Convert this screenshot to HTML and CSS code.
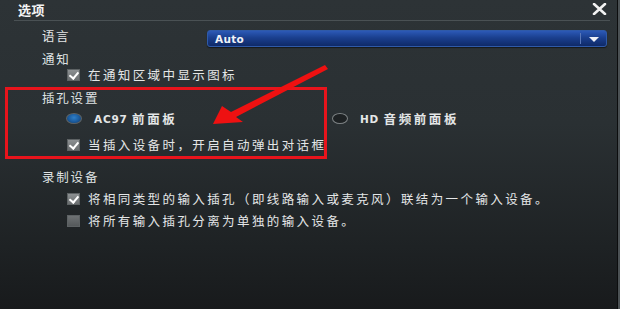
FILE: index.html
```html
<!DOCTYPE html>
<html lang="zh-CN">
<head>
<meta charset="utf-8">
<link rel="stylesheet" href="styles.css">
</head>
<body>
<div class="dialog">
  <div class="titlebar">
    <span class="title">选项</span>
    <svg class="close" width="15" height="12" viewBox="0 0 15 12"><path d="M2 1 L13 11 M13 1 L2 11" stroke="#f2f2f2" stroke-width="2.6" stroke-linecap="round"/></svg>
  </div>
  <div class="content">
    <div class="row lang">
      <span class="lbl">语言</span>
      <div class="select">
        <span class="sel-text">Auto</span>
        <span class="sel-div"></span>
        <span class="sel-arrow"></span>
      </div>
    </div>
    <div class="row head m4">通知</div>
    <div class="row item"><span class="cb on"></span><span>在通知区域中显示图标</span></div>
    <div class="row head m7">插孔设置</div>
    <div class="row radios">
      <div class="opt first"><span class="radio on"></span><span class="lat">AC97 </span><span class="cjk">前面板</span></div>
      <div class="opt"><span class="radio"></span><span class="lat">HD </span><span class="cjk">音频前面板</span></div>
    </div>
    <div class="row item m9"><span class="cb on"></span><span>当插入设备时，开启自动弹出对话框</span></div>
    <div class="row head m16">录制设备</div>
    <div class="row item m6"><span class="cb on"></span><span>将相同类型的输入插孔（即线路输入或麦克风）联结为一个输入设备。</span></div>
    <div class="row item m6"><span class="cb"></span><span>将所有输入插孔分离为单独的输入设备。</span></div>
  </div>
  <div class="highlight"></div>
  <svg class="arrow" width="620" height="309" viewBox="0 0 620 309">
    <polygon points="213,124 222,106 231,112 325,65 328,69 236,117 243,122" fill="#ee1111"/>
  </svg>
</div>
</body>
</html>
```
FILE: styles.css
```css
html, body {
  margin: 0;
  padding: 0;
  background: #1b1e20;
}
.dialog {
  position: relative;
  width: 617px;
  height: 309px;
  border-right: 1px solid #0c0d0e;
  box-shadow: 2px 0 0 #4b5154;
  background: linear-gradient(to bottom, #2d3336 0%, #2a3033 40%, #1e2224 80%, #181a1c 100%);
  font-family: "Noto Sans CJK SC", "Noto Sans", sans-serif;
  color: #e4e6e7;
  overflow: hidden;
}
.titlebar {
  display: flex;
  align-items: center;
  justify-content: space-between;
  height: 20px;
  margin: 0 7px 0 14px;
  padding: 0 3px 0 4px;
  border-bottom: 1px solid #4a5154;
}
.title {
  font-size: 13px;
  font-weight: bold;
  color: #f4f4f4;
  line-height: 20px;
  letter-spacing: 0.5px;
}
.close {
  display: block;
  margin-top: -3px;
}
.content {
  padding: 0 10px 0 42px;
}
.row {
  display: flex;
  align-items: center;
  height: 16px;
  font-size: 12.5px;
  letter-spacing: 2.4px;
  line-height: 16px;
  white-space: nowrap;
}
.lang {
  margin-top: 9px;
  height: 17px;
  align-items: flex-start;
}
.lbl {
  width: 165px;
  line-height: 12px;
  letter-spacing: 1.5px;
}
.select {
  flex: 1;
  display: flex;
  align-items: center;
  height: 17px;
  box-sizing: border-box;
  border: 1px solid #2f5aa8;
  border-radius: 3px;
  background: linear-gradient(to bottom, #2c59b6 0%, #1a3f8e 45%, #0f2a68 100%);
  box-shadow: 0 1px 1px rgba(0,0,0,0.5);
}
.sel-text {
  flex: 1;
  padding-left: 7px;
  font-family: "DejaVu Sans", sans-serif;
  font-size: 10.5px;
  font-weight: bold;
  letter-spacing: 0.3px;
  color: #f0f2f8;
}
.sel-div {
  width: 1px;
  height: 11px;
  background: #5a78b8;
}
.sel-arrow {
  width: 0;
  height: 0;
  margin: 1px 7px 0 8px;
  border-left: 5.5px solid transparent;
  border-right: 5.5px solid transparent;
  border-top: 5px solid #eef0f6;
}
.head {
  color: #dfe2e3;
  letter-spacing: 1.8px;
}
.m4 { margin-top: 4px; }
.m6 { margin-top: 6px; }
.m7 { margin-top: 7px; }
.m9 { margin-top: 9px; }
.m16 { margin-top: 16px; }
.item {
  padding-left: 25px;
}
.cb {
  position: relative;
  width: 13px;
  height: 12px;
  margin-right: 8px;
  box-sizing: border-box;
  border: 1px solid #5d6264;
  background: linear-gradient(to bottom, #8c9092, #6a6e70);
  flex: none;
}
.cb.on::after {
  content: "";
  position: absolute;
  left: 3px;
  top: 0px;
  width: 4px;
  height: 7px;
  border-right: 2.5px solid #ffffff;
  border-bottom: 2.5px solid #ffffff;
  transform: rotate(40deg);
}
.cb:not(.on) {
  background: linear-gradient(to bottom, #6e7274, #55595b);
}
.radios {
  margin-top: 3px;
  height: 19px;
  padding-left: 24px;
}
.opt {
  display: flex;
  align-items: center;
}
.opt.first {
  width: 266px;
}
.radio {
  width: 16px;
  height: 11px;
  box-sizing: border-box;
  border-radius: 50%;
  border: 1.5px solid #7e8385;
  background: #1e2224;
  margin-right: 12px;
  flex: none;
}
.radio.on {
  border-color: #5c6366;
  background: radial-gradient(ellipse at 50% 40%, #2f7fc8 0%, #1a5a9c 55%, #0e3564 100%);
}
.lat {
  font-family: "DejaVu Sans", sans-serif;
  font-size: 10.5px;
  font-weight: bold;
  letter-spacing: 0.8px;
  white-space: pre;
}
.cjk {
  font-size: 12.5px;
  font-weight: bold;
  letter-spacing: 2.6px;
}
.highlight {
  position: absolute;
  left: 5px;
  top: 87px;
  width: 322px;
  height: 72px;
  box-sizing: border-box;
  border: 3px solid #e8141c;
}
.arrow {
  position: absolute;
  left: 0;
  top: 0;
}
```
